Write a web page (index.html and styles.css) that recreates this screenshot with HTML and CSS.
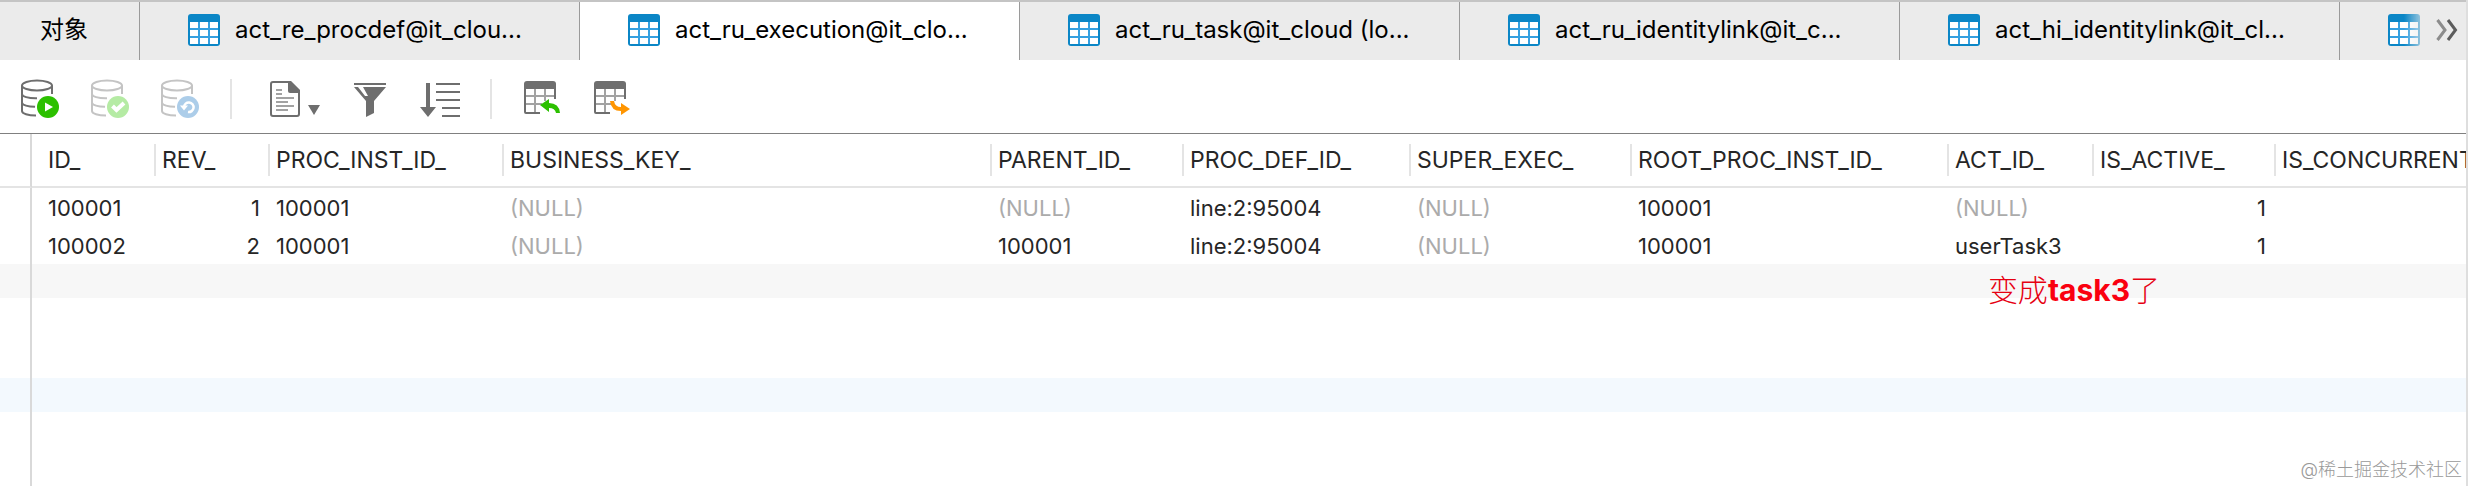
FILE: index.html
```html
<!DOCTYPE html>
<html lang="zh-CN">
<head>
<meta charset="utf-8">
<title>act_ru_execution@it_cloud</title>
<link rel="stylesheet" href="styles.css">
</head>
<body>
<svg class="defs" aria-hidden="true">
  <symbol id="grid" viewBox="0 0 32 32">
    <rect width="32" height="32" rx="3" fill="#0b86c6"/>
    <rect x="2" y="8" width="28" height="22" fill="#35a0e0"/>
    <path fill="#fff" d="M2 8h8v6H2zM12 8h8v6h-8zM22 8h8v6h-8zM2 16h8v6H2zM12 16h8v6h-8zM22 16h8v6h-8zM2 24h8v6H2zM12 24h8v6h-8zM22 24h8v6h-8z"/>
  </symbol>
  <symbol id="db" viewBox="0 0 40 40">
    <g fill="none" stroke="currentColor" stroke-width="2">
      <ellipse cx="17" cy="6.500" rx="15" ry="5"/>
      <path d="M2 6.500V32c0 2.600 6 4.500 14 4.500M32 6.500V15M2 15c0 2.500 6 4.500 15 4.300M2 23.500c0 2.500 6 4.500 14 4.300"/>
    </g>
    <circle cx="28" cy="28" r="13" fill="#fff"/>
  </symbol>
  <symbol id="sheet" viewBox="0 0 40 40">
    <path fill="none" stroke="#a2a2a2" stroke-width="2" d="M4 17h30M4 25h16M13 9v25M23 9v13"/>
    <path fill="none" stroke="#6e6e6e" stroke-width="2" d="M3 8v25q0 1 1 1h14M33 8v12"/>
    <path fill="#6e6e6e" d="M2 10V5q0-3 3-3h26q3 0 3 3v5z"/>
  </symbol>
</svg>

<nav class="tabs">
  <button class="tab tab-objects">对象</button>
  <button class="tab"><svg class="tab-icon"><use href="#grid"/></svg>act_re_procdef@it_clou...</button>
  <button class="tab active"><svg class="tab-icon"><use href="#grid"/></svg>act_ru_execution@it_clo...</button>
  <button class="tab"><svg class="tab-icon"><use href="#grid"/></svg>act_ru_task@it_cloud (lo...</button>
  <button class="tab"><svg class="tab-icon"><use href="#grid"/></svg>act_ru_identitylink@it_c...</button>
  <button class="tab"><svg class="tab-icon"><use href="#grid"/></svg>act_hi_identitylink@it_cl...</button>
  <button class="tab tab-cut" aria-label="下一个标签"><svg class="tab-icon"><use href="#grid"/></svg></button>
  <button class="more" aria-label="更多标签">
    <svg class="more-icon" viewBox="0 0 22 22" fill="none" stroke-width="3"><path stroke="#8c8c8c" d="M1.500 1l7.500 10-7.500 10"/><path stroke="#5c5c5c" d="M12 1l7.500 10L12 21"/></svg>
  </button>
</nav>

<div class="toolbar">
  <button class="tool" aria-label="开始事务">
    <svg viewBox="0 0 40 40"><use href="#db"/><circle cx="28" cy="28" r="11" fill="#2cc000"/><path fill="#fff" d="M25 23.500v9l8-4.500z"/></svg>
  </button>
  <button class="tool dim" aria-label="提交" disabled>
    <svg viewBox="0 0 40 40"><use href="#db"/><circle cx="28" cy="28" r="11" fill="#b5eba4"/><path fill="none" stroke="#fff" stroke-width="4" d="M22.500 27l4 4 7.500-7"/></svg>
  </button>
  <button class="tool dim" aria-label="回滚" disabled>
    <svg viewBox="0 0 40 40"><use href="#db"/><circle cx="28" cy="28" r="11" fill="#accde9"/><path fill="none" stroke="#fff" stroke-width="2.500" d="M24 28a4.800 4.800 0 1 1 4 5"/><path fill="#fff" d="M20 26.500h8l-4 5z"/></svg>
  </button>
  <span class="divider"></span>
  <button class="tool tool-wide" aria-label="文本">
    <svg viewBox="0 0 58 40">
      <path fill="none" stroke="#6e6e6e" stroke-width="2" d="M28 3H11q-2 0-2 2v30q0 2 2 2h24q2 0 2-2V12z"/>
      <path fill="#6e6e6e" d="M26 2h3l9 9v3H28q-2 0-2-2z"/>
      <path fill="none" stroke="#a2a2a2" stroke-width="2" d="M14 11h6M14 15h6M14 19h18M14 23h12M14 27h18M14 31h12"/>
      <path fill="#6e6e6e" d="M46 26h12l-6 10z"/>
    </svg>
  </button>
  <button class="tool" aria-label="筛选">
    <svg viewBox="0 0 40 40"><path fill="#6e6e6e" d="M4 4h32v2H4zM4 8h4l7 9h3l-5-9h23L24 22v12l-8 4V22z"/></svg>
  </button>
  <button class="tool" aria-label="排序">
    <svg viewBox="0 0 40 40"><path fill="#6e6e6e" d="M6 4h4v24h6L8 38 0 28h6zM16 4h24v2H16zM16 12h24v2H16zM16 20h24v2H16zM22 28h18v2H22zM22 36h18v2H22z"/></svg>
  </button>
  <span class="divider"></span>
  <button class="tool" aria-label="导入">
    <svg viewBox="0 0 40 40"><use href="#sheet"/><path fill="#2cc000" d="M18 26l9-6v4q10 0 11 10h-4q-1-5-7-5v4z"/></svg>
  </button>
  <button class="tool" aria-label="导出">
    <svg viewBox="0 0 40 40"><use href="#sheet"/><path fill="#ff9500" d="M38 30l-9-6v4q-6 0-7-6h-4q1 10 11 10v4z"/></svg>
  </button>
</div>

<main class="grid-pane">
  <table class="grid">
    <colgroup>
      <col class="c-gutter"><col class="c-id"><col class="c-rev"><col class="c-inst"><col class="c-key"><col class="c-parent"><col class="c-def"><col class="c-super"><col class="c-root"><col class="c-act"><col class="c-active"><col>
    </colgroup>
    <thead>
      <tr>
        <td></td>
        <th><span>ID_</span></th><th><span>REV_</span></th><th><span>PROC_INST_ID_</span></th><th><span>BUSINESS_KEY_</span></th><th><span>PARENT_ID_</span></th><th><span>PROC_DEF_ID_</span></th><th><span>SUPER_EXEC_</span></th><th><span>ROOT_PROC_INST_ID_</span></th><th><span>ACT_ID_</span></th><th><span>IS_ACTIVE_</span></th><th><span>IS_CONCURRENT</span></th>
      </tr>
    </thead>
    <tbody>
      <tr><td></td><td>100001</td><td class="num">1</td><td>100001</td><td class="null">(NULL)</td><td class="null">(NULL)</td><td>line:2:95004</td><td class="null">(NULL)</td><td>100001</td><td class="null">(NULL)</td><td class="num">1</td><td></td></tr>
      <tr><td></td><td>100002</td><td class="num">2</td><td>100001</td><td class="null">(NULL)</td><td>100001</td><td>line:2:95004</td><td class="null">(NULL)</td><td>100001</td><td>userTask3</td><td class="num">1</td><td></td></tr>
      <tr class="stripe-gray"><td></td><td colspan="11"></td></tr>
      <tr><td></td><td colspan="11"></td></tr>
      <tr><td></td><td colspan="11"></td></tr>
      <tr class="stripe-blue"><td></td><td colspan="11"></td></tr>
      <tr><td></td><td colspan="11"></td></tr>
      <tr><td></td><td colspan="11"></td></tr>
    </tbody>
  </table>
  <p class="note">变成<b>task3</b>了</p>
  <p class="watermark">@稀土掘金技术社区</p>
</main>
</body>
</html>
```
FILE: styles.css
```css
* { box-sizing: border-box; }

body {
  margin: 0;
  height: 100vh;
  display: flex;
  flex-direction: column;
  overflow: hidden;
  background: #fff;
  color: #262626;
  font: 22px/30px Inter, "Noto Sans CJK SC", sans-serif;
  border-right: 2px solid #dedede;
}

.defs { position: absolute; width: 0; height: 0; }

button {
  margin: 0;
  padding: 0;
  border: 0;
  background: none;
  color: #000;
  font: inherit;
}

.tabs {
  display: flex;
  flex: none;
  height: 60px;
  background: #ebebeb;
  border-top: 2px solid #c4c4c4;
}

.tab {
  display: flex;
  flex: none;
  align-items: center;
  gap: 15px;
  width: 440px;
  padding: 0 0 2px 48px;
  border-right: 1px solid #9a9a9a;
  font-size: 24px;
  white-space: nowrap;
}

.tab.active { background: #fff; }
.tab-objects { width: 140px; padding-left: 40px; }
.tab-cut { flex: 1; width: auto; border: 0; }
.tab-cut .tab-icon {
  -webkit-mask-image: linear-gradient(90deg, #000 50%, rgba(0, 0, 0, 0.4));
  mask-image: linear-gradient(90deg, #000 50%, rgba(0, 0, 0, 0.4));
}
.tab-icon { flex: none; width: 32px; height: 32px; }

.more { flex: none; display: flex; align-items: center; padding: 0 8px 2px 0; }
.more-icon { width: 22px; height: 22px; }

.toolbar {
  display: flex;
  flex: none;
  align-items: center;
  gap: 30px;
  height: 74px;
  padding: 4px 20px 0;
  border-bottom: 1px solid #808080;
}

.tool { width: 40px; height: 40px; color: #6e6e6e; }
.tool svg { display: block; width: 100%; height: 100%; }
.tool.dim { color: #c4c4c4; }
.tool-wide { width: 58px; }
.divider { width: 2px; height: 40px; background: #e4e4e4; }

.grid-pane { position: relative; flex: 1; min-height: 0; overflow: hidden; }

.grid {
  width: 100%;
  table-layout: fixed;
  border-collapse: separate;
  border-spacing: 0;
}

.c-gutter { width: 32px; }
.c-id { width: 122px; }
.c-rev { width: 114px; }
.c-inst { width: 234px; }
.c-key { width: 488px; }
.c-parent { width: 192px; }
.c-def { width: 227px; }
.c-super { width: 221px; }
.c-root { width: 317px; }
.c-act { width: 145px; }
.c-active { width: 182px; }

.grid th, .grid td {
  padding: 2px 8px 0;
  text-align: left;
  font-weight: 400;
  white-space: nowrap;
}

.grid thead tr { height: 54px; }
.grid thead th, .grid thead td { border-bottom: 2px solid #e4e4e4; }
.grid thead th { padding: 0; }
.grid th span { display: block; border-left: 2px solid #e4e4e4; padding-left: 6px; font-size: 23px; line-height: 32px; }
.grid th:nth-child(2) span { border-color: transparent; padding-left: 14px; }

.grid tbody tr { height: 38px; }
.grid tr > :first-child { border-right: 2px solid #d9d9d9; }
.grid tbody td:nth-child(2) { padding-left: 16px; }
.grid .num { text-align: right; }
.grid .null { color: #ababab; }

.stripe-gray td { background: linear-gradient(#f7f7f7 34px, transparent 34px); }
.stripe-blue td { background: linear-gradient(#f3f9fe 34px, transparent 34px); }

.note {
  position: absolute;
  top: 137px;
  right: 306px;
  margin: 0;
  color: #e60012;
  font-size: 30px;
  font-weight: 300;
  line-height: 38px;
}

.note b { color: #fa0010; font-weight: 700; }

.watermark {
  position: absolute;
  right: 4px;
  bottom: 4px;
  margin: 0;
  color: #999;
  font-size: 18px;
  font-weight: 300;
  line-height: 24px;
}
```
